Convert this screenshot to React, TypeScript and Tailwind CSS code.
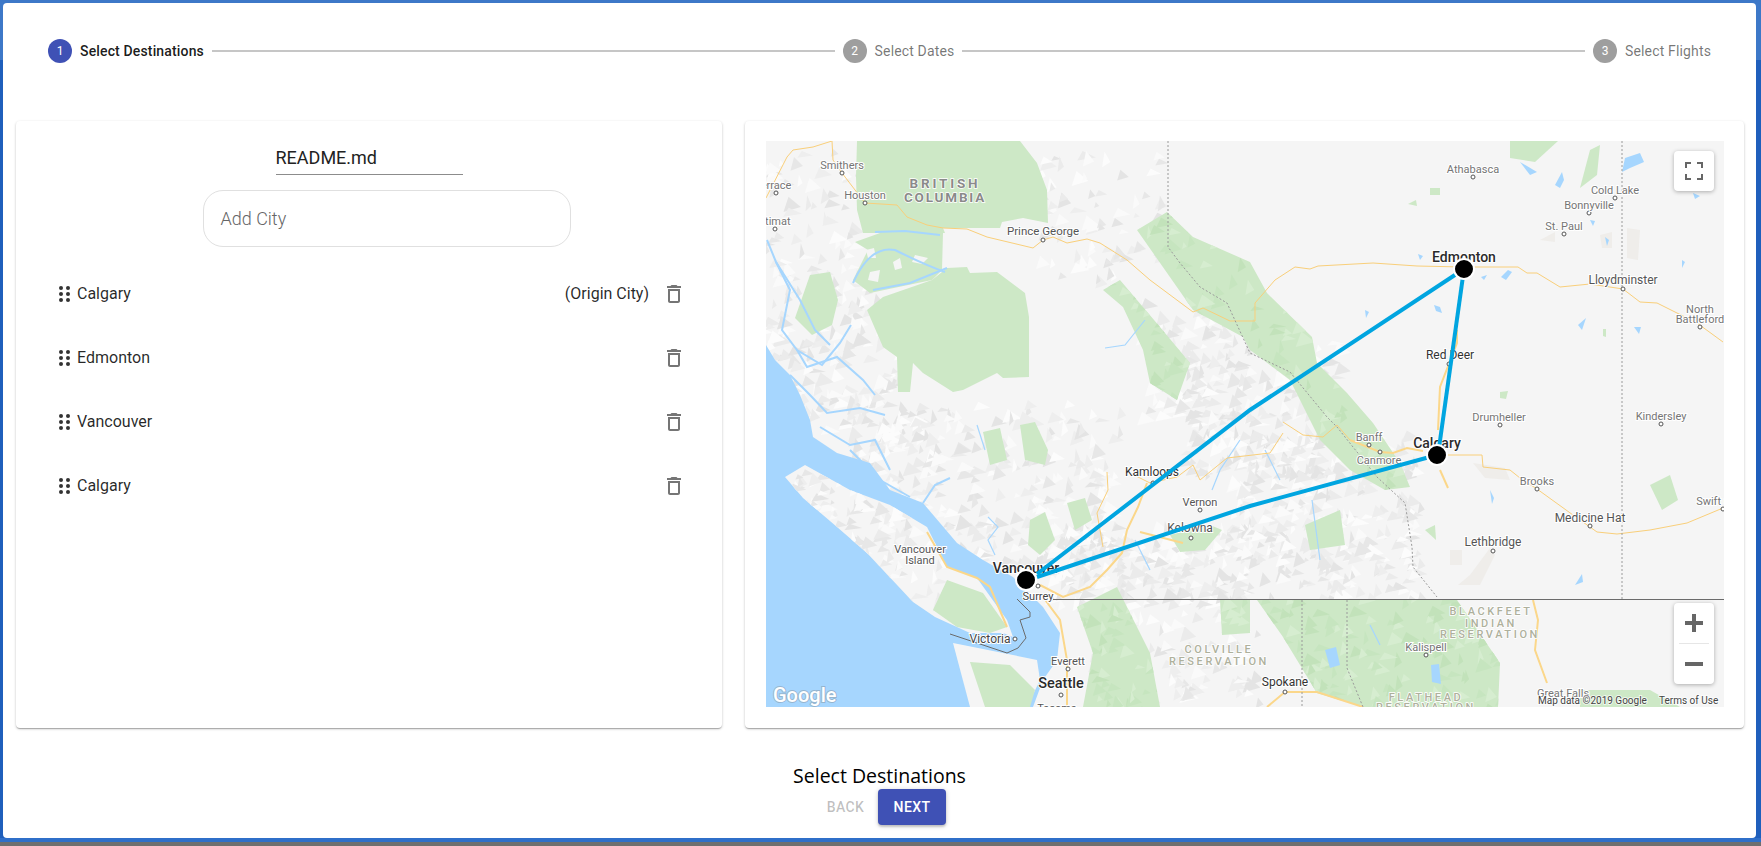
const cities = ['Calgary', 'Edmonton', 'Vancouver', 'Calgary'];

type Label = [string, number, number, number?, string?, number?];

// [text, center x, baseline y, size, color, weight] in page coordinates
const labels: Label[] = [
  ['Smithers', 842, 169, 11, '#757575'],
  ['Terrace', 773, 189, 11, '#757575'],
  ['Houston', 865, 199, 11, '#757575'],
  ['Kitimat', 773, 225, 11, '#757575'],
  ['Prince George', 1043, 235, 11.5, '#555'],
  ['Athabasca', 1473, 173, 11, '#757575'],
  ['Cold Lake', 1615, 194, 11, '#757575'],
  ['Bonnyville', 1589, 209, 11, '#757575'],
  ['St. Paul', 1564, 230, 11, '#757575'],
  ['Lloydminster', 1623, 284, 12, '#555'],
  ['North', 1700, 313, 11, '#757575'],
  ['Battleford', 1700, 323, 11, '#757575'],
  ['Red Deer', 1450, 359, 12, '#333'],
  ['Drumheller', 1499, 421, 11, '#757575'],
  ['Kindersley', 1661, 420, 11, '#757575'],
  ['Banff', 1369, 441, 11, '#757575'],
  ['Canmore', 1379, 464, 11, '#757575'],
  ['Brooks', 1537, 485, 11, '#757575'],
  ['Swift Current', 1728, 505, 11, '#757575'],
  ['Medicine Hat', 1590, 522, 12, '#555'],
  ['Lethbridge', 1493, 546, 12, '#555'],
  ['Kalispell', 1426, 651, 11, '#757575'],
  ['Spokane', 1285, 686, 12, '#333'],
  ['Great Falls', 1563, 697, 11, '#757575'],
  ['Kamloops', 1152, 476, 12, '#333'],
  ['Vernon', 1200, 506, 11, '#555'],
  ['Kelowna', 1190, 532, 12, '#555'],
  ['Vancouver', 920, 553, 11, '#555'],
  ['Island', 920, 564, 11, '#555'],
  ['Surrey', 1038, 600, 11, '#444'],
  ['Victoria', 990, 643, 12, '#444'],
  ['Everett', 1068, 665, 11, '#555'],
  ['Tacoma', 1057, 712, 11, '#555'],
  ['Edmonton', 1464, 262, 14, '#2b2b2b', 500],
  ['Calgary', 1437, 448, 14, '#2b2b2b', 500],
  ['Vancouver', 1026, 573, 14, '#2b2b2b', 500],
  ['Seattle', 1061, 688, 14.5, '#2b2b2b', 500],
];

// [text, center x, baseline y, color, size, letter spacing]
const spaced: [string, number, number, string, number, number][] = [
  ['BRITISH', 945, 188, '#8a8a8a', 13.5, 2.8],
  ['COLUMBIA', 945, 202, '#8a8a8a', 13.5, 1.8],
  ['BLACKFEET', 1491, 615, '#aeb09c', 11, 2.6],
  ['INDIAN', 1491, 627, '#aeb09c', 11, 2.6],
  ['RESERVATION', 1490, 638, '#aeb09c', 11, 2.6],
  ['FLATHEAD', 1426, 701, '#aeb09c', 11, 2.6],
  ['RESERVATION', 1426, 711, '#aeb09c', 11, 2.6],
  ['COLVILLE', 1219, 653, '#aeb09c', 11, 2.6],
  ['RESERVATION', 1219, 665, '#aeb09c', 11, 2.6],
];

const dots: [number, number][] = [
  [842, 173], [776, 193], [865, 203], [775, 229], [1043, 240], [1473, 177], [1615, 198], [1589, 213],
  [1564, 234], [1623, 289], [1700, 327], [1449, 364], [1500, 425], [1661, 424], [1369, 445], [1380, 452],
  [1537, 489], [1723, 509], [1590, 526], [1493, 551], [1426, 655], [1285, 692], [1153, 483], [1200, 510],
  [1191, 538], [1038, 586], [1015, 639], [1068, 669], [1061, 695],
];

const bcForest = [
  '857,141 1020,141 1037,163 1047,190 1048,223 1023,218 1002,222 1000,228 943,228 945,233 863,233 857,210 856,177',
  '855,242 880,233 943,233 942,270 932,280 870,293 853,280 868,250',
  '947,268 967,267 970,273 997,272 1025,293 1029,317 1029,377 1003,378 997,373 963,390 953,392 923,373 913,363 910,392 898,392 897,357 883,347 867,310 883,297 932,280',
];

const woods = [
  '1137,230 1167,212 1193,237 1250,262 1267,293 1312,337 1317,363 1347,393 1373,423 1400,463 1410,487 1385,490 1350,470 1320,440 1290,380 1250,350 1243,337 1193,310',
  '1103,290 1120,280 1137,300 1160,327 1190,363 1177,400 1150,383 1143,350 1123,307',
  '810,275 830,272 838,300 832,325 812,335 795,318',
  '1257,600 1457,600 1500,663 1498,707 1363,707 1317,693 1283,637',
  '1077,607 1117,587 1150,653 1160,707 1083,707 1093,653',
  '1220,600 1250,600 1250,633 1222,635',
  '983,432 1000,428 1007,460 990,465',
  '1020,425 1035,422 1048,450 1045,465 1025,460',
  '1030,520 1045,512 1055,540 1040,555 1028,545',
  '1067,503 1085,498 1092,520 1075,530',
  '1305,525 1340,510 1345,545 1310,550',
  '1650,485 1670,475 1678,500 1662,510',
  '1425,530 1435,525 1436,540',
  '1170,535 1210,525 1222,530 1205,550 1180,552',
  '1590,150 1600,145 1597,175 1580,188',
  '1510,141 1558,141 1535,162 1510,158',
  '1430,188 1440,188 1440,195 1430,195',
  '1408,204 1416,200 1417,206',
  '1500,392 1508,391 1506,399 1500,398',
  '1603,329 1606,329 1606,337 1603,336',
  '1580,690 1650,690 1680,707 1580,707',
  '933,610 947,580 983,593 1007,627 990,633 957,627',
  '970,662 1010,665 1035,690 1030,707 985,707',
];

const clearings = ['866,250 874,248 876,258 868,258', '893,262 900,258 902,268 895,270', '915,255 928,258 922,264 912,262', '870,272 880,270 878,282 868,280'];

const urban = ['1450,550 1462,550 1462,565 1450,565', '1470,575 1490,548 1495,555 1480,585 1458,585', '1473,463 1505,468 1510,480 1485,478', '1540,240 1555,232 1555,242', '1600,235 1612,232 1612,248 1602,248', '1627,228 1640,230 1638,260 1627,258'];

const water =
  '766,345 775,360 790,375 800,395 810,420 813,437 837,453 870,463 890,490 923,503 957,543 983,560 1013,577 1043,607 1060,633 1057,660 1043,680 1033,707 766,707';
const olympic = '953,643 1003,653 1037,660 1040,680 1027,707 970,707';
const island = '785,477 805,465 850,490 890,505 927,527 947,567 977,578 1007,620 1013,637 1003,633 970,633 935,617 913,602 867,553 837,527 803,498';

const fjords = [
  'M767 240 L776 262 L790 290 L782 330 L797 350 L822 365 L840 343 L851 325',
  'M776 262 L800 300 L815 330 L830 345',
  'M797 350 L807 367 L837 357 L863 380 L875 395',
  'M790 375 L810 395 L827 413 L860 408 L885 415',
  'M820 427 L850 445 L875 440 L890 470',
  'M923 503 L935 485 L950 478',
  'M910 497 L880 480 L850 450',
  'M853 283 Q870 245 895 250 Q925 265 945 272',
  'M875 232 L905 231 L940 235',
  'M873 290 L910 283 L947 268',
];

const rivers = [
  'M977 425 L985 450',
  'M988 517 L998 527 L988 540 L995 555',
  'M1105 348 L1125 345 L1145 320',
  'M1240 440 L1220 470 L1212 490',
  'M1265 450 L1280 480',
  'M1312 500 L1320 560',
  'M1135 540 L1150 570',
  'M1370 625 L1380 645',
];

const lakes = [
  '1622,172 1625,158 1640,153 1644,162 1630,168',
  '1520,162 1537,172 1530,175',
  '1555,185 1562,172 1564,180 1560,188',
  '1325,650 1336,647 1340,665 1330,668',
  '1431,665 1439,664 1441,684 1432,682',
  '1434,305 1440,307 1442,313 1436,311',
  '1508,270 1512,272 1506,280 1501,277',
  '1578,325 1586,318 1582,330',
  '1365,310 1369,312 1366,318',
  '1418,254 1423,256 1420,260',
  '1481,277 1487,275 1484,280',
  '1634,327 1641,327 1639,334',
  '1682,260 1685,262 1682,268',
  '1605,237 1609,240 1607,246',
  '1590,220 1595,221 1593,226',
  '1693,193 1700,196 1695,199',
  '1490,490 1494,498 1492,504',
  '1575,585 1582,574 1583,582',
];

const highwaysThin = [
  '766,198 787,157 793,150 813,147 832,141 833,160 842,173 865,203 897,205 907,217 927,225 943,228 967,229 987,237 1033,248 1043,240 1053,237 1067,243 1087,239 1100,243 1127,260 1150,280 1193,312 1203,308 1230,321 1255,321 1255,303 1275,280 1295,267 1310,269 1318,266 1373,263 1417,266 1463,267 1518,267 1527,273 1537,273 1560,287 1590,284 1623,289 1640,302 1657,303 1697,323 1723,342',
  '1448,455 1482,455 1483,467 1510,470 1520,478 1537,489 1573,515 1590,527 1597,532 1617,534 1650,530 1687,523 1723,508',
  '1107,472 1108,490 1097,513 1103,547',
  '1130,473 1150,483 1177,477 1193,465 1200,480 1227,458 1270,453 1283,433',
  '1283,422 1303,435 1323,437 1337,425 1350,440',
];

const highwaysThick = [
  '1457,330 1457,343 1440,387 1438,430',
  '1423,451 1407,448 1393,453 1380,452 1350,440',
  '1440,470 1448,488',
  '1040,585 1063,597 1090,587 1107,570 1122,553 1127,530 1138,507 1147,483',
  '1140,532 1183,543',
  '1043,597 1060,620 1067,660 1067,707',
  '927,532 947,567 977,578 990,587 1007,627',
  '1533,600 1538,620 1535,650 1547,683',
  '1267,707 1285,692 1317,692 1363,707',
];

const dashed = [
  '1168,141 1168,247 1180,263 1200,287 1227,303 1250,353 1290,372 1327,417 1337,427 1377,477 1405,503 1412,547 1413,567 1437,597',
  '1622,141 1622,599',
  '1302,600 1302,707',
  '1347,600 1347,668 1363,707',
];

// terrain facets, generated from a fixed seed so the picture never changes
function facets(seed: number, n: number, x0: number, y0: number, x1: number, y1: number, colors: string[]) {
  let s = seed;
  const rnd = () => {
    s = (s * 16807) % 2147483647;
    return s / 2147483647;
  };
  const out: { p: string; c: string }[] = [];
  for (let i = 0; i < n; i++) {
    const x = x0 + rnd() * (x1 - x0);
    const y = y0 + rnd() * (y1 - y0);
    const a = 3 + rnd() * 11;
    const b = 3 + rnd() * 8;
    const c = colors[Math.floor(rnd() * colors.length)];
    out.push({
      p: `${x.toFixed(1)},${y.toFixed(1)} ${(x + a).toFixed(1)},${(y + b).toFixed(1)} ${(x - a * 0.4).toFixed(1)},${(y + b * 1.5).toFixed(1)}`,
      c,
    });
  }
  return out;
}

const greys = ['#ebebeb', '#e7e7e7', '#eeeeee', '#e4e4e4', '#fafafa', '#fcfcfc'];
const greens = ['#c2e2ba', '#c6e5bf', '#d6edd0'];

const terrain = [
  ...facets(11, 200, 766, 240, 905, 440, greys),
  ...facets(23, 300, 850, 400, 1120, 560, greys),
  ...facets(37, 200, 1050, 520, 1250, 600, greys),
  ...facets(41, 160, 1180, 340, 1340, 470, greys),
  ...facets(53, 300, 1230, 430, 1420, 600, greys),
  ...facets(67, 70, 1040, 150, 1160, 280, greys),
  ...facets(71, 90, 1140, 290, 1260, 420, greys),
  ...facets(83, 100, 1090, 600, 1260, 700, greys),
  ...facets(97, 40, 766, 141, 860, 240, greys),
];
const islandTerrain = facets(101, 170, 790, 465, 945, 600, greys);
const woodTexture = [
  ...facets(113, 300, 1100, 210, 1420, 500, greens),
  ...facets(127, 260, 1070, 590, 1500, 707, greens),
];

function GripDots() {
  return (
    <svg width="11" height="16" viewBox="0 0 11 16" className="fill-[#333] shrink-0">
      {[2, 8, 14].map((y) => (
        <g key={y}>
          <circle cx="2" cy={y} r="2" />
          <circle cx="9" cy={y} r="2" />
        </g>
      ))}
    </svg>
  );
}

function TrashIcon() {
  return (
    <svg width="24" height="24" viewBox="0 0 24 24" className="fill-[#757575]">
      <path d="M6 19c0 1.1.9 2 2 2h8c1.1 0 2-.9 2-2V7H6v12zM8 9h8v10H8V9zm7.5-5l-1-1h-5l-1 1H5v2h14V4z" />
    </svg>
  );
}

function Step({ n, label, active }: { n: number; label: string; active?: boolean }) {
  return (
    <div className="flex items-center shrink-0">
      <span
        className={`w-6 h-6 rounded-full flex items-center justify-center text-xs text-white ${
          active ? 'bg-[#3f51b5]' : 'bg-[#9e9e9e]'
        }`}
      >
        {n}
      </span>
      <span className={`ml-2 text-sm tracking-[0.15px] ${active ? 'font-medium text-black/90' : 'text-black/55'}`}>
        {label}
      </span>
    </div>
  );
}

function MapView() {
  return (
    <div className="relative w-[958px] h-[566px] overflow-hidden bg-[#f5f5f5]">
      <svg width="958" height="566" viewBox="766 141 958 566" className="block font-[Roboto,sans-serif]">
        <defs>
          <clipPath id="island">
            <polygon points={island} />
          </clipPath>
          <clipPath id="woods">
            {woods.map((p, i) => (
              <polygon key={i} points={p} />
            ))}
          </clipPath>
        </defs>
        {terrain.map((t, i) => (
          <polygon key={i} points={t.p} fill={t.c} />
        ))}
        {urban.map((p, i) => (
          <polygon key={i} points={p} fill="#efedea" />
        ))}
        {bcForest.map((p, i) => (
          <polygon key={i} points={p} fill="#cde8c6" />
        ))}
        {clearings.map((p, i) => (
          <polygon key={i} points={p} fill="#f5f5f5" />
        ))}
        {woods.map((p, i) => (
          <polygon key={i} points={p} fill="#cde8c6" />
        ))}
        <g clipPath="url(#woods)">
          {woodTexture.map((t, i) => (
            <polygon key={i} points={t.p} fill={t.c} />
          ))}
        </g>
        {fjords.map((d, i) => (
          <path key={i} d={d} fill="none" stroke="#a6d6fe" strokeWidth="2" />
        ))}
        {rivers.map((d, i) => (
          <path key={i} d={d} fill="none" stroke="#a6d6fe" strokeWidth="1.2" />
        ))}
        {lakes.map((p, i) => (
          <polygon key={i} points={p} fill="#a6d6fe" />
        ))}
        <polygon points={water} fill="#a6d6fe" />
        <polygon points={olympic} fill="#f5f5f5" />
        <polygon points={island} fill="#f5f5f5" />
        <g clipPath="url(#island)">
          {islandTerrain.map((t, i) => (
            <polygon key={i} points={t.p} fill={t.c} />
          ))}
        </g>
        <polygon points={woods[21]} fill="#cde8c6" />
        <polygon points={woods[22]} fill="#cde8c6" />
        {highwaysThin.map((p, i) => (
          <polyline key={i} points={p} fill="none" stroke="#f9cf7a" strokeWidth="1" />
        ))}
        {highwaysThick.map((p, i) => (
          <polyline key={i} points={p} fill="none" stroke="#fbd78a" strokeWidth="2" />
        ))}
        {dashed.map((p, i) => (
          <polyline key={i} points={p} fill="none" stroke="#9a9a9a" strokeWidth="1" strokeDasharray="2 2" />
        ))}
        <polyline points="1053,599.5 1724,599.5" fill="none" stroke="#6b6b6b" strokeWidth="1" />
        <polyline
          points="1017,599 1030,612 1030,617 1020,620 1026,638 1018,648 1007,653 950,634"
          fill="none"
          stroke="#6b6b6b"
          strokeWidth="1"
        />
        {dots.map(([x, y], i) => (
          <circle key={i} cx={x} cy={y} r="2" fill="#fff" stroke="#555" strokeWidth="1" />
        ))}
        {labels.map(([text, x, y, size, color, weight], i) => (
          <text
            key={i}
            x={x}
            y={y}
            textAnchor="middle"
            fontSize={size}
            fontWeight={weight ?? 400}
            fill={color}
            stroke="#fff"
            strokeWidth="2"
            className="[paint-order:stroke]"
          >
            {text}
          </text>
        ))}
        {spaced.map(([text, x, y, color, size, tracking], i) => (
          <text
            key={i}
            x={x}
            y={y}
            textAnchor="middle"
            fontSize={size}
            fontWeight={size > 12 ? 700 : 500}
            letterSpacing={tracking}
            fill={color}
            stroke="#fff"
            strokeWidth="1.5"
            className="[paint-order:stroke]"
          >
            {text}
          </text>
        ))}
        <g fill="none" stroke="#00a5e0" strokeWidth="4">
          <path d="M1464 269 L1438 455" />
          <path d="M1464 269 L1250 410 L1037 574" />
          <path d="M1437 455 L1250 506 L1037 577" />
        </g>
        {[
          [1464, 269],
          [1437, 455],
          [1026, 580],
        ].map(([x, y]) => (
          <circle key={x} cx={x} cy={y} r="10" fill="#000" stroke="#fff" strokeWidth="2" />
        ))}
        <text
          x="773"
          y="702"
          fontSize="20"
          fontWeight="500"
          fill="#fff"
          stroke="#777"
          strokeOpacity="0.35"
          strokeWidth="2"
          className="[paint-order:stroke]"
        >
          Google
        </text>
        <text x="1538" y="704" fontSize="10" fill="#444" stroke="#fff" strokeOpacity="0.7" strokeWidth="2" className="[paint-order:stroke]">
          Map data ©2019 Google
        </text>
        <text x="1659" y="704" fontSize="10" fill="#444" stroke="#fff" strokeOpacity="0.7" strokeWidth="2" className="[paint-order:stroke]">
          Terms of Use
        </text>
      </svg>

      <button className="absolute top-[10px] right-[10px] w-10 h-10 bg-white rounded-sm shadow-[0_1px_4px_rgba(0,0,0,0.3)] flex items-center justify-center">
        <svg width="18" height="18" viewBox="0 0 18 18" className="fill-[#666]">
          <path d="M0 0h6v2H2v4H0zM12 0h6v6h-2V2h-4zM0 12h2v4h4v2H0zM16 12h2v6h-6v-2h4z" />
        </svg>
      </button>

      <div className="absolute top-[462px] right-[10px] w-10 h-[81px] bg-white rounded-sm shadow-[0_1px_4px_rgba(0,0,0,0.3)] flex flex-col items-center">
        <div className="h-10 flex items-center justify-center">
          <svg width="18" height="18" viewBox="0 0 18 18" className="fill-[#666]">
            <path d="M7 0h4v7h7v4h-7v7H7v-7H0V7h7z" />
          </svg>
        </div>
        <div className="w-[30px] h-px bg-[#e6e6e6]" />
        <div className="h-10 flex items-center justify-center">
          <svg width="18" height="18" viewBox="0 0 18 18" className="fill-[#666]">
            <path d="M0 7h18v4H0z" />
          </svg>
        </div>
      </div>
    </div>
  );
}

export default function App() {
  return (
    <div className="relative h-[846px] w-full overflow-hidden flex flex-col font-[Roboto,sans-serif]">
      <div className="h-[60px] bg-[#3d78c8]" />
      <div className="flex-1 bg-[#1f5fbc]" />
      <div className="h-1 bg-[#2f6fc9]" />
      <div className="h-1 bg-[#6f6f6f]" />

      <div className="absolute left-[3px] top-[3px] w-[1753px] h-[835px] bg-white rounded flex flex-col">
        <div className="flex items-center pt-9 px-[45px]">
          <Step n={1} label="Select Destinations" active />
          <div className="flex-1 h-0.5 bg-[#c6c6c6] mx-2" />
          <Step n={2} label="Select Dates" />
          <div className="flex-1 h-0.5 bg-[#c6c6c6] mx-2" />
          <Step n={3} label="Select Flights" />
        </div>

        <div className="flex gap-[23px] pl-[13px] pr-3 mt-[58px] h-[607px]">
          <div className="w-[706px] bg-white rounded shadow-[0_1px_3px_0_rgba(0,0,0,0.2),0_1px_1px_0_rgba(0,0,0,0.14),0_2px_1px_-1px_rgba(0,0,0,0.12)] flex flex-col items-center pt-5">
            <div className="w-[187px] h-[34px] border-b border-[#8c8c8c] text-[18px] text-[#222] leading-[34px]">
              README.md
            </div>
            <div className="mt-[15px] ml-[35px] w-[368px] h-[57px] rounded-[20px] border border-[#e0e0e0] flex items-center pl-[17px] text-[18px] font-light text-[#666]">
              Add City
            </div>
            <ul className="mt-[15px] w-full">
              {cities.map((city, i) => (
                <li key={i} className="h-16 flex items-center pl-[43px] pr-[36px] text-base text-black/85">
                  <GripDots />
                  <span className="ml-[7px] flex-1">{city}</span>
                  {i === 0 && <span>(Origin City)</span>}
                  <span className="ml-[13px]">
                    <TrashIcon />
                  </span>
                </li>
              ))}
            </ul>
          </div>

          <div className="w-[999px] bg-white rounded shadow-[0_1px_3px_0_rgba(0,0,0,0.2),0_1px_1px_0_rgba(0,0,0,0.14),0_2px_1px_-1px_rgba(0,0,0,0.12)] pl-[21px] pt-5">
            <MapView />
          </div>
        </div>

        <div className="mt-auto pb-[13px] flex flex-col items-center">
          <div className="text-[19.5px] leading-[27px] text-black font-['Open_Sans',sans-serif]">Select Destinations</div>
          <div className="flex justify-center">
            <button className="w-[65px] h-9 text-sm font-medium tracking-[0.4px] text-black/25">BACK</button>
            <button className="w-[68px] h-9 rounded bg-[#3f51b5] text-sm font-medium tracking-[0.4px] text-white shadow-[0_1px_5px_0_rgba(0,0,0,0.2),0_2px_2px_0_rgba(0,0,0,0.14)]">
              NEXT
            </button>
          </div>
        </div>
      </div>
    </div>
  );
}
